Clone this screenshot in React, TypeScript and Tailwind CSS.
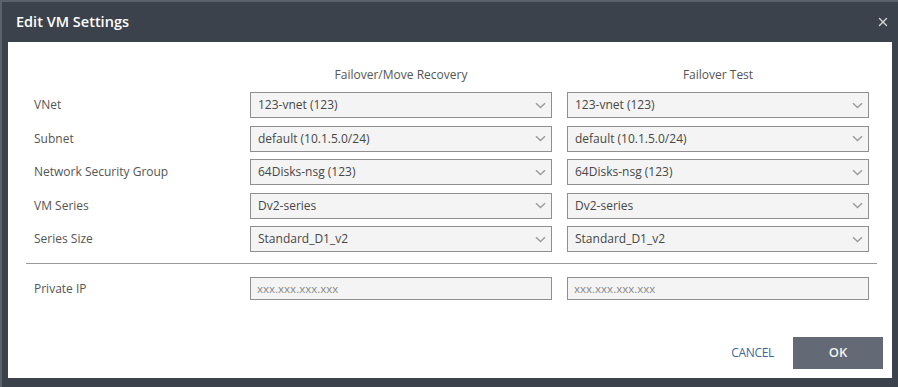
import { X } from 'lucide-react';

const rows = [
  { label: 'VNet', a: '123-vnet (123)', b: '123-vnet (123)' },
  { label: 'Subnet', a: 'default (10.1.5.0/24)', b: 'default (10.1.5.0/24)' },
  { label: 'Network Security Group', a: '64Disks-nsg (123)', b: '64Disks-nsg (123)' },
  { label: 'VM Series', a: 'Dv2-series', b: 'Dv2-series' },
  { label: 'Series Size', a: 'Standard_D1_v2', b: 'Standard_D1_v2' },
];

function Chevron() {
  return (
    <svg width="11" height="7" viewBox="0 0 11 7" className="shrink-0">
      <path d="M1 1.2 L5.5 5.5 L10 1.2" fill="none" stroke="#9c9c9c" strokeWidth="1.5" />
    </svg>
  );
}

function FakeSelect({ value }: { value: string }) {
  return (
    <div className="h-[26px] flex items-center justify-between border border-[#8f8f8f] bg-[#f4f4f4] pl-[7px] pr-[5px] text-[12px] text-[#474747]">
      <span>{value}</span>
      <Chevron />
    </div>
  );
}

function IpInput() {
  return (
    <div className="h-[23px] flex items-center border border-[#8f8f8f] bg-[#f4f4f4] pl-[6px] text-[11.5px] text-[#8a8a8a]">
      xxx.xxx.xxx.xxx
    </div>
  );
}

export default function App() {
  return (
    <div
      className="w-[898px] h-[387px] flex flex-col bg-[#3b424c] border-t-2 border-l-2 border-[#5a616c]"
      style={{ fontFamily: '"Open Sans", "Liberation Sans", sans-serif' }}
    >
      {/* header */}
      <div className="h-[40px] flex items-center justify-between pl-[14px] pr-[8px]">
        <h1 className="text-[14.5px] font-semibold text-white">Edit VM Settings</h1>
        <X size={14} strokeWidth={2.2} className="text-[#dcdcdc]" />
      </div>

      {/* body */}
      <div className="flex-1 ml-[6px] mr-[6px] mb-[9px] bg-white pt-[25px] pl-[18px] pr-[15px] flex flex-col">
        <div className="grid grid-cols-[209px_302px_302px] gap-x-[15px] text-[12px] text-[#555]">
          <div />
          <div className="text-center leading-[16px]">Failover/Move Recovery</div>
          <div className="text-center leading-[16px]">Failover Test</div>
        </div>

        <div className="mt-[9px] grid grid-cols-[209px_302px_302px] gap-x-[15px] gap-y-[7.5px]">
          {rows.map((r) => (
            <div key={r.label} className="contents">
              <div className="pl-[8px] flex items-center text-[12px] text-[#555]">{r.label}</div>
              <FakeSelect value={r.a} />
              <FakeSelect value={r.b} />
            </div>
          ))}
        </div>

        <div className="mt-[11px] h-px bg-[#9a9a9a]" />

        <div className="mt-[13px] grid grid-cols-[209px_302px_302px] gap-x-[15px]">
          <div className="pl-[8px] flex items-center text-[12px] text-[#555]">Private IP</div>
          <IpInput />
          <IpInput />
        </div>

        <div className="mt-auto mb-[9px] flex items-center justify-end gap-[19px]">
          <button className="text-[12px] text-[#3a6a9a] tracking-tight">CANCEL</button>
          <button className="w-[90px] h-[32px] bg-[#636a75] text-[13px] font-semibold text-[#f0f0f0] -mr-[6px]">
            OK
          </button>
        </div>
      </div>
    </div>
  );
}
